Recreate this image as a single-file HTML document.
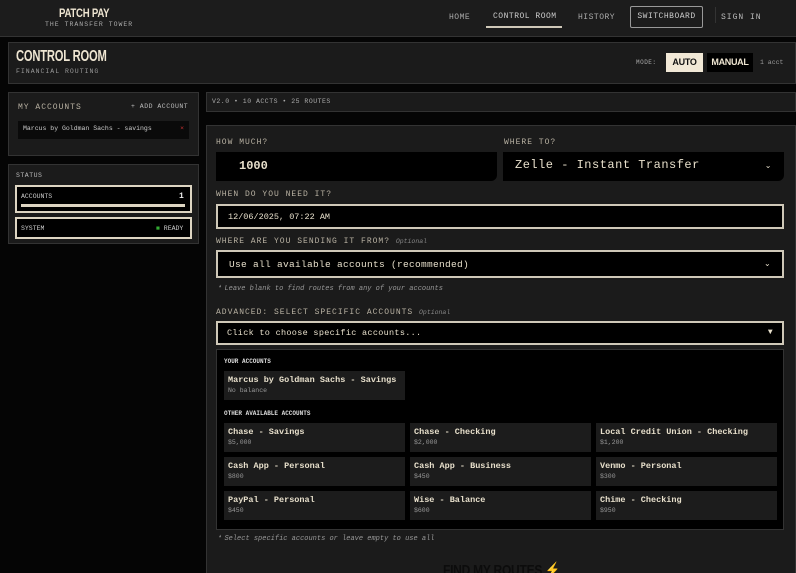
<!DOCTYPE html><html><head><style>
*{box-sizing:border-box;margin:0;padding:0}
html,body{width:796px;height:573px;overflow:hidden}
body{background:#050505;font-family:"Liberation Mono",monospace;color:#cfc8b8;position:relative}
.a{position:absolute}
.pn{position:absolute;background:#1b1b1b;border:1px solid #333}
.imp{font-family:"Liberation Sans",sans-serif;font-weight:bold;color:#efe6d2;letter-spacing:-0.3px;white-space:nowrap}
.lbl{font-size:8px;letter-spacing:1px;color:#b8b1a2}
.inp{position:absolute;background:#000;color:#e8e0cc}
.card{position:absolute;background:#1c1c1c;width:181px;height:29px;padding:4px 4px;white-space:nowrap;overflow:hidden}
.card b{display:block;font-size:8.5px;color:#e8e0cc}
.card i{display:block;font-style:normal;font-size:6.5px;color:#999;margin-top:2px}
.hint{font-size:7px;font-style:italic;color:#999}
</style></head><body>
<div class="a" style="left:0;top:0;width:796px;height:37px;background:#1c1c1c;border-bottom:1px solid #333"></div>
<div class="a imp" style="left:59px;top:6px;font-size:12px;transform:scaleX(.8);transform-origin:left">PATCH PAY</div>
<div class="a" style="left:45px;top:21px;font-size:6.5px;letter-spacing:1px;color:#aaa">THE TRANSFER TOWER</div>
<div class="a" style="left:449px;top:13px;font-size:8px;color:#aaa;letter-spacing:.5px">HOME</div>
<div class="a" style="left:493px;top:12px;font-size:8px;color:#ccc;letter-spacing:.5px">CONTROL ROOM</div>
<div class="a" style="left:486px;top:26px;width:76px;height:2px;background:#cfc8b8"></div>
<div class="a" style="left:578px;top:13px;font-size:8px;color:#aaa;letter-spacing:.5px">HISTORY</div>
<div class="a" style="left:630px;top:6px;width:73px;height:22px;border:1px solid #999;border-radius:2px;font-size:8px;color:#ccc;text-align:center;line-height:20px;letter-spacing:.5px">SWITCHBOARD</div>
<div class="a" style="left:715px;top:7px;width:1px;height:16px;background:#333"></div>
<div class="a" style="left:721px;top:13px;font-size:8px;color:#bbb;letter-spacing:1px">SIGN IN</div>

<div class="pn" style="left:8px;top:42px;width:788px;height:42px"></div>
<div class="a imp" style="left:16px;top:48px;font-size:16px;transform:scaleX(.7);transform-origin:left">CONTROL ROOM</div>
<div class="a" style="left:16px;top:68px;font-size:6.5px;letter-spacing:1px;color:#999">FINANCIAL ROUTING</div>
<div class="a" style="left:636px;top:59px;font-size:6px;color:#aaa;letter-spacing:.5px">MODE:</div>
<div class="a imp" style="left:666px;top:53px;width:37px;height:19px;background:#f1e8d6;color:#111;font-size:9px;text-align:center;line-height:19px">AUTO</div>
<div class="a imp" style="left:707px;top:53px;width:46px;height:19px;background:#000;font-size:9px;text-align:center;line-height:19px">MANUAL</div>
<div class="a" style="left:760px;top:59px;font-size:6.5px;color:#999">1 acct</div>

<div class="pn" style="left:8px;top:92px;width:191px;height:64px"></div>
<div class="a lbl" style="left:18px;top:103px">MY ACCOUNTS</div>
<div class="a" style="left:131px;top:103px;font-size:6.5px;letter-spacing:.5px;color:#bbb">+ ADD ACCOUNT</div>
<div class="a" style="left:18px;top:121px;width:171px;height:18px;background:#0a0a0a;font-size:6.5px;color:#ccc;padding:4px 5px">Marcus by Goldman Sachs - savings<span style="float:right;color:#c33">×</span></div>

<div class="pn" style="left:8px;top:164px;width:191px;height:80px"></div>
<div class="a" style="left:16px;top:172px;font-size:6.5px;letter-spacing:.5px;color:#bbb">STATUS</div>
<div class="a" style="left:15px;top:185px;width:177px;height:28px;background:#000;border:2px solid #ddd5c2"></div>
<div class="a" style="left:21px;top:193px;font-size:6.5px;color:#ccc">ACCOUNTS</div>
<div class="a" style="left:179px;top:192px;font-size:8px;color:#eee;font-weight:bold">1</div>
<div class="a" style="left:21px;top:204px;width:164px;height:3px;background:#ddd5c2"></div>
<div class="a" style="left:15px;top:217px;width:177px;height:22px;background:#000;border:2px solid #ddd5c2"></div>
<div class="a" style="left:21px;top:225px;font-size:6.5px;color:#ccc">SYSTEM</div>
<div class="a" style="left:156px;top:225px;font-size:6.5px;color:#ccc"><span style="color:#3a3">■</span> READY</div>

<div class="pn" style="left:206px;top:92px;width:590px;height:20px"></div>
<div class="a" style="left:212px;top:98px;font-size:6.5px;color:#aaa;letter-spacing:.5px">V2.0 • 10 ACCTS • 25 ROUTES</div>

<div class="pn" style="left:206px;top:125px;width:590px;height:448px;border-bottom:none"></div>
<div class="a lbl" style="left:216px;top:138px">HOW MUCH?</div>
<div class="a lbl" style="left:504px;top:138px">WHERE TO?</div>
<div class="inp" style="left:216px;top:152px;width:281px;height:29px;border-radius:0 0 6px 0;font-size:12px;font-weight:bold;padding:7px 23px">1000</div>
<div class="inp" style="left:503px;top:152px;width:281px;height:29px;border-radius:0 0 6px 0;font-size:12px;padding:6px 12px;letter-spacing:.5px">Zelle - Instant Transfer<span style="float:right;font-size:8px;margin-top:3px">⌄</span></div>
<div class="a lbl" style="left:216px;top:190px">WHEN DO YOU NEED IT?</div>
<div class="inp" style="left:216px;top:204px;width:568px;height:25px;border:2px solid #cfc8b8;font-size:8.5px;padding:6px 10px">12/06/2025, 07:22 AM</div>
<div class="a lbl" style="left:216px;top:237px">WHERE ARE YOU SENDING IT FROM? <i style="font-size:6.5px;color:#888;letter-spacing:0">Optional</i></div>
<div class="inp" style="left:216px;top:250px;width:568px;height:28px;border:2px solid #cfc8b8;font-size:9.5px;padding:7px 11px;letter-spacing:.3px">Use all available accounts (recommended)<span style="float:right;font-size:8px">⌄</span></div>
<div class="a hint" style="left:218px;top:284px">❛ Leave blank to find routes from any of your accounts</div>
<div class="a lbl" style="left:216px;top:308px">ADVANCED: SELECT SPECIFIC ACCOUNTS <i style="font-size:6.5px;color:#888;letter-spacing:0">Optional</i></div>
<div class="inp" style="left:216px;top:321px;width:568px;height:24px;border:2px solid #cfc8b8;font-size:8.5px;padding:5px 9px;letter-spacing:.3px">Click to choose specific accounts...<span style="float:right;font-size:8px">▼</span></div>
<div class="inp" style="left:216px;top:349px;width:568px;height:181px;border:1px solid #333"></div>
<div class="a" style="left:224px;top:358px;font-size:6px;font-weight:bold;color:#ddd">YOUR ACCOUNTS</div>
<div class="card" style="left:224px;top:371px"><b>Marcus by Goldman Sachs - Savings</b><i>No balance</i></div>
<div class="a" style="left:224px;top:410px;font-size:6px;font-weight:bold;color:#ddd">OTHER AVAILABLE ACCOUNTS</div>
<div class="card" style="left:224px;top:423px"><b>Chase - Savings</b><i>$5,000</i></div>
<div class="card" style="left:410px;top:423px"><b>Chase - Checking</b><i>$2,000</i></div>
<div class="card" style="left:596px;top:423px"><b>Local Credit Union - Checking</b><i>$1,200</i></div>
<div class="card" style="left:224px;top:457px"><b>Cash App - Personal</b><i>$800</i></div>
<div class="card" style="left:410px;top:457px"><b>Cash App - Business</b><i>$450</i></div>
<div class="card" style="left:596px;top:457px"><b>Venmo - Personal</b><i>$300</i></div>
<div class="card" style="left:224px;top:491px"><b>PayPal - Personal</b><i>$450</i></div>
<div class="card" style="left:410px;top:491px"><b>Wise - Balance</b><i>$600</i></div>
<div class="card" style="left:596px;top:491px"><b>Chime - Checking</b><i>$950</i></div>
<div class="a hint" style="left:218px;top:534px">❛ Select specific accounts or leave empty to use all</div>
<div class="a imp" style="left:443px;top:561px;font-size:15px;color:#0c0c0c;transform:scaleX(.8);transform-origin:left">FIND MY ROUTES <span style="color:#d9a62a">⚡</span></div>
</body></html>
